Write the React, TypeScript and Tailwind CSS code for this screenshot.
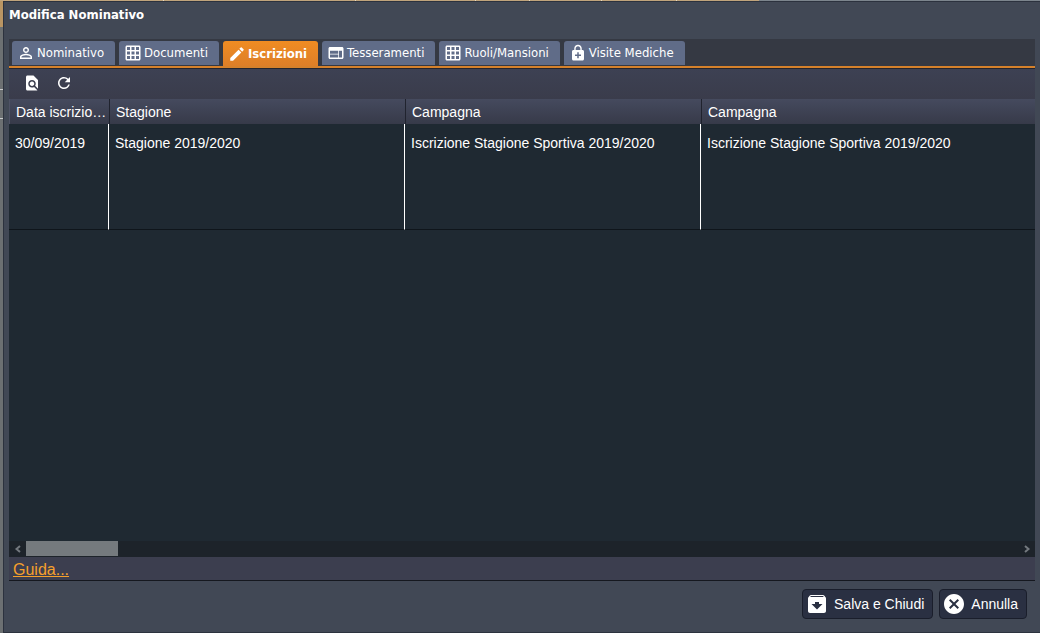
import type { ReactNode } from "react";
import { useState } from "react";
import type { IconType } from "react-icons";
import {
  MdArchive,
  MdCancel,
  MdEdit,
  MdEnhancedEncryption,
  MdFindInPage,
  MdGridOn,
  MdPersonOutline,
  MdRefresh,
  MdWeb,
} from "react-icons/md";

const tabs: { label: string; Icon: IconType }[] = [
  { label: "Nominativo", Icon: MdPersonOutline },
  { label: "Documenti", Icon: MdGridOn },
  { label: "Iscrizioni", Icon: MdEdit },
  { label: "Tesseramenti", Icon: MdWeb },
  { label: "Ruoli/Mansioni", Icon: MdGridOn },
  { label: "Visite Mediche", Icon: MdEnhancedEncryption },
];

const columns = ["Data iscrizione", "Stagione", "Campagna", "Campagna"];
const rows = [
  [
    "30/09/2019",
    "Stagione 2019/2020",
    "Iscrizione Stagione Sportiva 2019/2020",
    "Iscrizione Stagione Sportiva 2019/2020",
  ],
];

function FooterButton({ Icon, children }: { Icon: IconType; children: ReactNode }) {
  return (
    <button
      type="button"
      className="flex h-[30px] items-center gap-[5px] rounded border border-[#1a1e2b] bg-[#2a3042] pr-2 pl-0.5 text-[14px] text-white"
    >
      <Icon className="size-6" aria-hidden />
      {children}
    </button>
  );
}

/* Edge of the page that stays visible behind the dialog. */
function PageTopEdge() {
  return (
    <div className="flex h-px shrink-0 bg-[#7c858d]" aria-hidden>
      <div className="flex w-[73%] gap-px bg-[#e5d9c4]">
        <div className="w-[163px] bg-[#c0a47c]" />
        <div className="w-[191px] bg-[#c0a47c]" />
        <div className="w-[119px] bg-[#c0a47c]" />
        <div className="w-[53px] bg-[#c0a47c]" />
        <div className="w-[71px] bg-[#c0a47c]" />
        <div className="w-[74px] bg-[#c0a47c]" />
        <div className="flex-1 bg-[#c0a47c]" />
      </div>
    </div>
  );
}

function PageLeftEdge() {
  return (
    <div className="flex w-[3px] shrink-0 flex-col bg-[#6c7072]" aria-hidden>
      <div className="h-[26px] bg-[#b99563]" />
      <div className="h-[62px]" />
      <div className="h-px bg-[#c9cbcc]" />
      <div className="h-7" />
      <div className="h-px bg-[#c9cbcc]" />
    </div>
  );
}

export default function App() {
  const [active, setActive] = useState("Iscrizioni");
  return (
    <div className="flex h-screen flex-col font-['Liberation_Sans',sans-serif] text-white">
      <PageTopEdge />
      <div className="flex min-h-0 flex-1">
        <PageLeftEdge />
        <section
          aria-labelledby="dialog-title"
          className="flex min-w-0 flex-1 flex-col border-y border-l border-[#2c323e] bg-[#414855] px-[5px]"
        >
          <h1
            id="dialog-title"
            className="h-[37px] pt-[3px] font-['DejaVu_Sans_Condensed','DejaVu_Sans',sans-serif] text-[13px] leading-5 font-bold"
          >
            Modifica Nominativo
          </h1>

          <div
            role="tablist"
            className="flex h-[29px] shrink-0 items-end gap-1 border-b-2 border-[#d5812b] bg-[#353943] pl-[3px] font-['DejaVu_Sans_Condensed','DejaVu_Sans',sans-serif] text-[13px]"
          >
            {tabs.map(({ label, Icon }) => (
              <button
                key={label}
                type="button"
                role="tab"
                aria-selected={label === active}
                onClick={() => setActive(label)}
                className={
                  label === active
                    ? "flex h-[25px] items-center gap-0.5 rounded-t-[3px] bg-linear-to-b from-[#f08c22] to-[#dd7f28] pr-[11px] pl-[5px] font-bold"
                    : "mb-px flex h-6 items-center gap-0.5 rounded-t-[3px] bg-[#606c88] pr-[11px] pl-[5px]"
                }
              >
                <Icon className="size-[18px]" aria-hidden />
                {label}
              </button>
            ))}
          </div>

          <div className="flex h-[31px] shrink-0 items-center gap-[14px] border-t border-[#23252e] bg-linear-to-b from-[#3d4153] to-[#3a3c4b] pb-0.5 pl-[14px]">
            <button type="button" aria-label="Cerca">
              <MdFindInPage className="size-[18px]" />
            </button>
            <button type="button" aria-label="Aggiorna">
              <MdRefresh className="size-[18px]" />
            </button>
          </div>

          <div className="min-h-0 flex-1 overflow-hidden bg-[#1f2932]">
            <table className="w-full table-fixed border-separate border-spacing-0 text-left text-[14px]">
              <colgroup>
                <col className="w-[100px]" />
                <col className="w-[296px]" />
                <col className="w-[296px]" />
                <col />
              </colgroup>
              <thead>
                <tr className="h-[25px] bg-linear-to-b from-[#454a5e] to-[#373a49]">
                  {columns.map((name, i) => (
                    <th
                      key={i}
                      scope="col"
                      className="truncate border-l border-[#20232e] p-0 pt-0.5 pr-0.5 pl-1.5 font-normal first:border-[#4f5366]"
                    >
                      {name}
                    </th>
                  ))}
                </tr>
              </thead>
              <tbody>
                {rows.map((row, r) => (
                  <tr key={r} className="h-[106px] align-top">
                    {row.map((cell, i) => (
                      <td
                        key={i}
                        className="border-b border-b-[#0f151b] p-0 pt-2 pl-1.5 leading-[22px] not-last:border-r not-last:border-r-white"
                      >
                        {cell}
                      </td>
                    ))}
                  </tr>
                ))}
              </tbody>
            </table>
          </div>

          <div className="flex h-4 shrink-0 bg-[#1d232a] text-[#73787e]">
            <button type="button" aria-label="Scorri a sinistra" className="flex h-[15px] w-[17px] items-center justify-center">
              <svg viewBox="0 0 8 8" className="size-2 fill-none stroke-current stroke-2">
                <path d="M6 1 2.5 4 6 7" />
              </svg>
            </button>
            <div className="h-[15px] w-[92px] bg-[#757a7e]" />
            <button type="button" aria-label="Scorri a destra" className="ml-auto flex h-[15px] w-[17px] items-center justify-center">
              <svg viewBox="0 0 8 8" className="size-2 fill-none stroke-current stroke-2">
                <path d="M2 1 5.5 4 2 7" />
              </svg>
            </button>
          </div>

          <div className="h-6 shrink-0 border-b border-[#15181f] bg-[#3c3e4f] pl-1 leading-[26px]">
            <a href="#guida" className="text-[16px] text-[#f5a02c] underline">
              Guida...
            </a>
          </div>

          <footer className="flex h-[51px] shrink-0 items-start justify-end gap-1.5 pt-2 pr-2">
            <FooterButton Icon={MdArchive}>Salva e Chiudi</FooterButton>
            <FooterButton Icon={MdCancel}>Annulla</FooterButton>
          </footer>
        </section>
      </div>
    </div>
  );
}
